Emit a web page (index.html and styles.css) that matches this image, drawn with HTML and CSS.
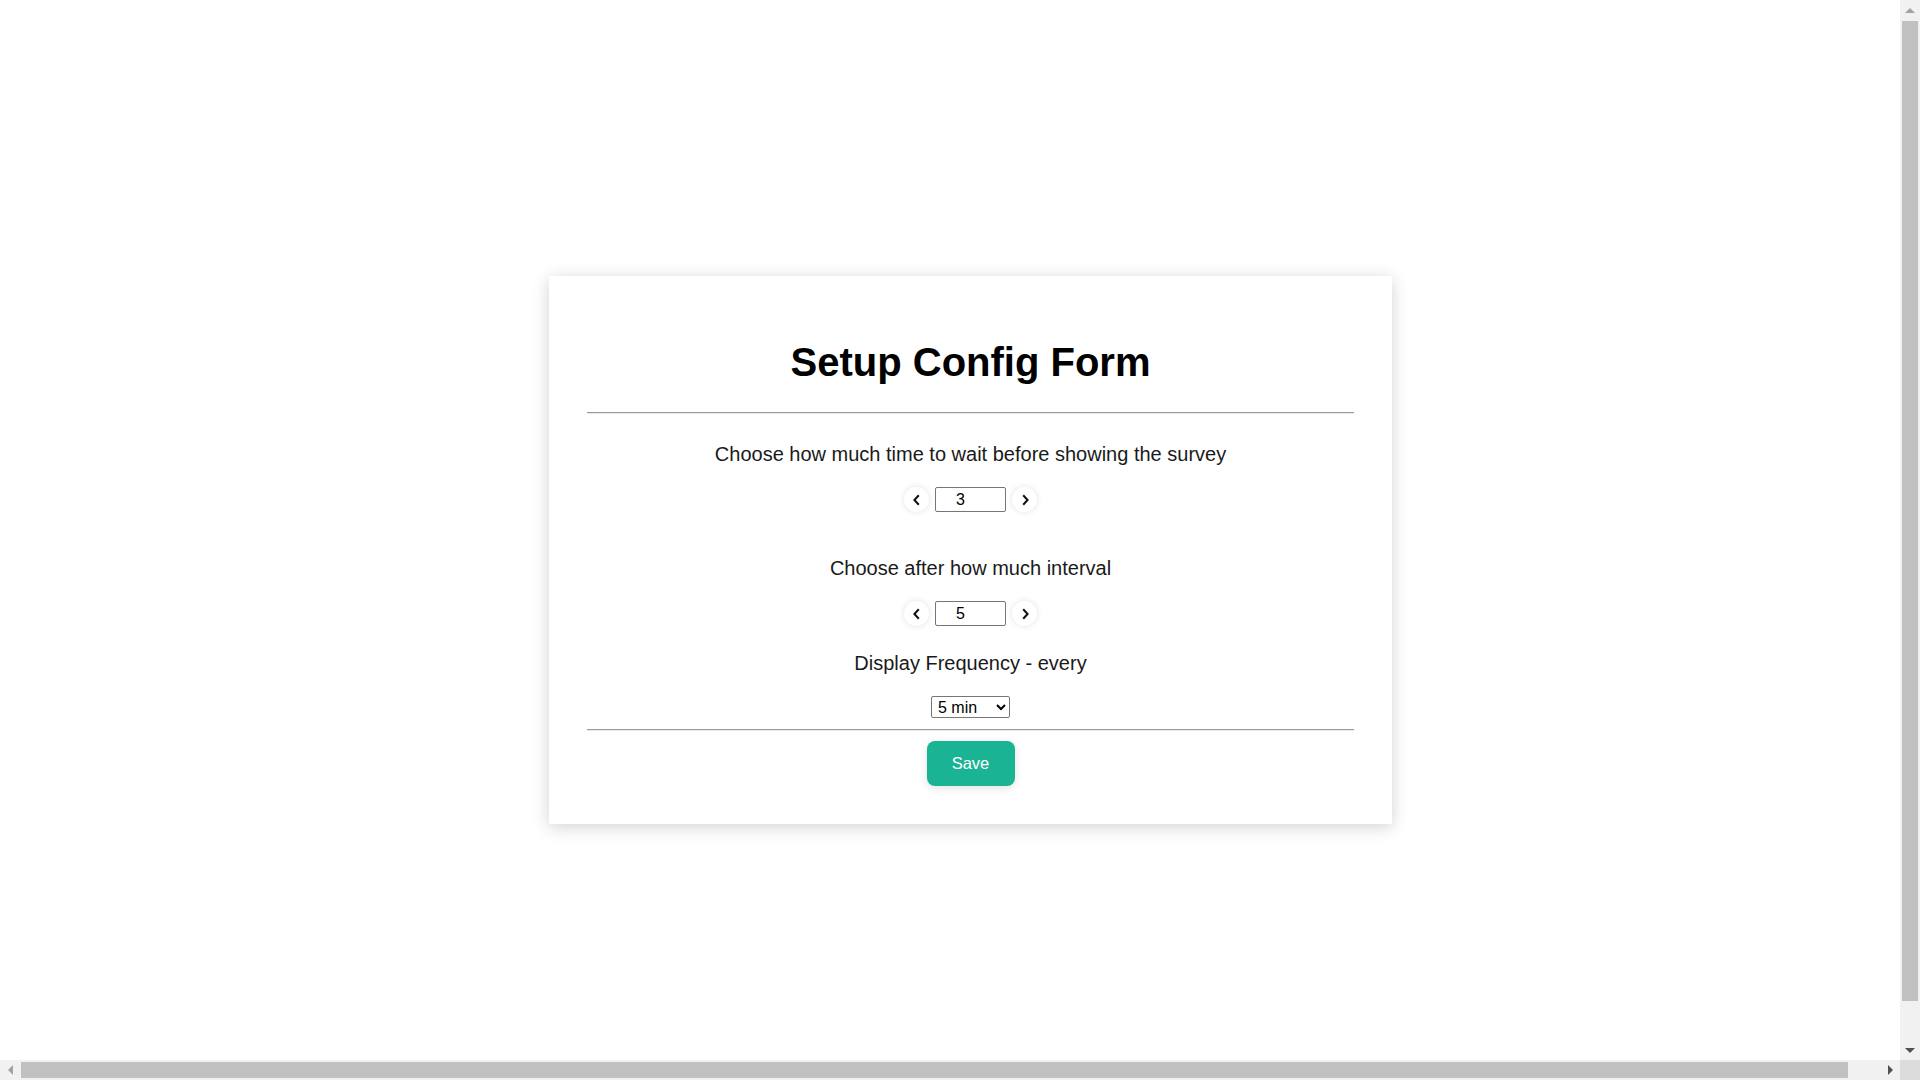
FILE: index.html
```html
<!DOCTYPE html>
<html lang="en">
<head>
<meta charset="utf-8">
<title>Setup Config Form</title>
<link rel="stylesheet" href="styles.css">
</head>
<body>
<div class="page">
  <form class="card">
    <h1 class="title">Setup Config Form</h1>
    <hr class="rule">
    <p class="label label-first">Choose how much time to wait before showing the survey</p>
    <div class="stepper">
      <button type="button" class="step-btn" aria-label="decrease">
        <svg viewBox="0 0 12 12" width="12" height="12"><path d="M7.8 1.2 L3.4 6 L7.8 10.8" fill="none" stroke="#111" stroke-width="2"/></svg>
      </button>
      <input class="step-input" type="text" value="3">
      <button type="button" class="step-btn" aria-label="increase">
        <svg viewBox="0 0 12 12" width="12" height="12"><path d="M4.2 1.2 L8.6 6 L4.2 10.8" fill="none" stroke="#111" stroke-width="2"/></svg>
      </button>
    </div>
    <p class="label label-second">Choose after how much interval</p>
    <div class="stepper stepper-second">
      <button type="button" class="step-btn" aria-label="decrease">
        <svg viewBox="0 0 12 12" width="12" height="12"><path d="M7.8 1.2 L3.4 6 L7.8 10.8" fill="none" stroke="#111" stroke-width="2"/></svg>
      </button>
      <input class="step-input" type="text" value="5">
      <button type="button" class="step-btn" aria-label="increase">
        <svg viewBox="0 0 12 12" width="12" height="12"><path d="M4.2 1.2 L8.6 6 L4.2 10.8" fill="none" stroke="#111" stroke-width="2"/></svg>
      </button>
    </div>
    <p class="label label-third">Display Frequency - every</p>
    <div class="select-row">
      <select class="freq">
        <option>5 min</option>
        <option>10 min</option>
        <option>15 min</option>
      </select>
    </div>
    <hr class="rule rule-bottom">
    <div class="actions">
      <button type="button" class="save">Save</button>
    </div>
  </form>
</div>

<div class="vscroll" aria-hidden="true">
  <div class="sb-arrow arrow-up"></div>
  <div class="vthumb"></div>
  <div class="sb-arrow arrow-down"></div>
</div>
<div class="hscroll" aria-hidden="true">
  <div class="sb-arrow arrow-left"></div>
  <div class="hthumb"></div>
  <div class="sb-arrow arrow-right"></div>
</div>
<div class="sb-corner" aria-hidden="true"></div>
</body>
</html>
```

FILE: styles.css
```css
html, body {
  margin: 0;
  padding: 0;
  background: #ffffff;
}

body {
  font-family: "Liberation Sans", Arial, sans-serif;
  color: #1a1a1a;
}

.page {
  width: 1941px;
  height: 1100px;
  display: flex;
  align-items: center;
  justify-content: center;
}

.card {
  box-sizing: border-box;
  width: 843px;
  height: 548px;
  padding: 37px 38px;
  background: #ffffff;
  box-shadow: 0 3px 16px rgba(0, 0, 0, 0.18);
  display: flex;
  flex-direction: column;
  align-items: stretch;
}

.title {
  margin: 26px 0 27px;
  font-size: 40px;
  line-height: 46px;
  font-weight: 700;
  color: #000;
  text-align: center;
}

.rule {
  margin: 0;
  height: 0;
  border: 0;
  border-top: 1px solid #9c9c9c;
  border-bottom: 1px solid #e8e8e8;
}

.rule-bottom {
  margin-top: 11px;
}

.label {
  margin: 0;
  font-size: 20px;
  line-height: 23px;
  text-align: center;
  color: #1a1a1a;
}

.label-first { margin-top: 29px; }
.label-second { margin-top: 45px; }
.label-third { margin-top: 26px; }

.stepper {
  margin-top: 21px;
  height: 25px;
  display: flex;
  align-items: center;
  justify-content: center;
  gap: 6px;
}

.stepper-second {
  margin-top: 21px;
}

.step-btn {
  width: 25px;
  height: 25px;
  padding: 0;
  border: 0;
  border-radius: 50%;
  background: #ffffff;
  box-shadow: 0 0 6px rgba(0, 0, 0, 0.12);
  display: flex;
  align-items: center;
  justify-content: center;
  cursor: pointer;
}

.step-btn svg {
  display: block;
}

.step-input {
  box-sizing: border-box;
  width: 71px;
  height: 25px;
  margin: 0;
  padding: 0 22px 0 2px;
  border: 1px solid #767676;
  border-radius: 2px;
  font-family: "Liberation Sans", Arial, sans-serif;
  font-size: 16px;
  color: #000;
  text-align: center;
  background: #fff;
}

.select-row {
  margin-top: 21px;
  display: flex;
  justify-content: center;
}

.freq {
  box-sizing: border-box;
  width: 79px;
  height: 22px;
  margin: 0;
  padding: 0 0 0 2px;
  border: 1px solid #767676;
  border-radius: 2px;
  font-family: "Liberation Sans", Arial, sans-serif;
  font-size: 16px;
  color: #000;
  background: #fff;
}

.actions {
  margin-top: 10px;
  display: flex;
  justify-content: center;
}

.save {
  width: 88px;
  height: 45px;
  padding: 0;
  border: 0;
  border-radius: 8px;
  background: #1ab394;
  color: #ffffff;
  font-family: "Liberation Sans", Arial, sans-serif;
  font-size: 16.5px;
  box-shadow: 0 2px 8px rgba(0, 0, 0, 0.12);
  cursor: pointer;
}

/* faux browser scrollbars, overlaid on the page edges */
.vscroll {
  position: fixed;
  top: 0;
  right: 0;
  width: 20px;
  height: 1060px;
  background: #f1f1f1;
  display: flex;
  flex-direction: column;
  align-items: center;
}

.hscroll {
  position: fixed;
  left: 0;
  bottom: 0;
  width: 1900px;
  height: 20px;
  background: #f1f1f1;
  display: flex;
  align-items: center;
}

.sb-corner {
  position: fixed;
  right: 0;
  bottom: 0;
  width: 20px;
  height: 20px;
  background: #dcdcdc;
}

.sb-arrow {
  flex: none;
  width: 20px;
  height: 20px;
  display: flex;
  align-items: center;
  justify-content: center;
}

.sb-arrow::before {
  content: "";
  width: 0;
  height: 0;
  border: 5px solid transparent;
}

.arrow-up::before {
  border-top: 0;
  border-bottom: 5px solid #a3a3a3;
}

.arrow-down::before {
  border-bottom: 0;
  border-top: 5px solid #505050;
}

.arrow-left::before {
  border-left: 0;
  border-right: 5px solid #a3a3a3;
}

.arrow-right::before {
  border-right: 0;
  border-left: 5px solid #505050;
}

.vthumb {
  width: 16px;
  height: 980px;
  margin-top: 1px;
  background: #c1c1c1;
}

.arrow-down {
  margin-top: auto;
}

.hthumb {
  width: 1827px;
  height: 16px;
  margin-left: 1px;
  background: #c1c1c1;
}

.arrow-right {
  margin-left: auto;
}
```
